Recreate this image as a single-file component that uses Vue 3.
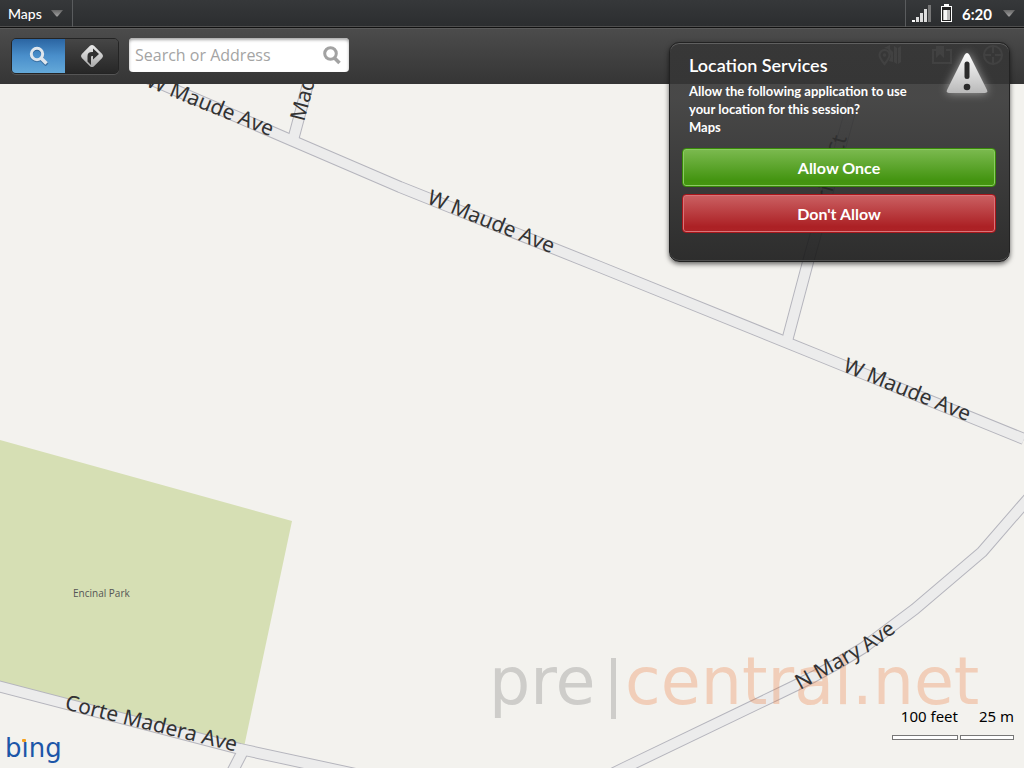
<script setup>
import { ref } from 'vue'

const query = ref('')
const mode = ref('search')
const dialogOpen = ref(true)

const roads = [
  'M100 57 L145 77 L293 141 L400 187 L600 267 L820 356 L1024 439',
  'M293 140 L308 84 L315 58',
  'M787 341 L808 262 L845 130 L856 90',
  'M-10 684 L240 749 L360 775',
  'M243 751 L228 780',
  'M604 778 L624 768 L780 693 L813 677 L840 662 L863 648 L915 609 L982 552 L1034 492'
]
</script>

<template>
  <div class="screen">
    <header class="status">
      <button class="app-menu" type="button">
        Maps
        <svg width="14" height="9" viewBox="0 0 14 9" aria-hidden="true">
          <path d="M1 1h12L8 7q-1 1-2 0z" fill="url(#arrow)" />
          <defs>
            <linearGradient id="arrow" x2="0" y2="1">
              <stop stop-color="#646464" />
              <stop offset="1" stop-color="#a4a4a4" />
            </linearGradient>
          </defs>
        </svg>
      </button>
      <button class="system" type="button" aria-label="System menu, 6:20">
        <svg width="19" height="19" viewBox="0 0 19 19" aria-hidden="true">
          <path d="M0 16h3v2H0z" fill="#fff" />
          <path d="M4 13h3v5H4z" fill="#ddd" />
          <path d="M8 9h3v9H8z" fill="#ddd" />
          <path d="M12 5h3v13h-3z" fill="#ddd" />
          <path d="M16 1h3v17h-3z" fill="#777" />
        </svg>
        <svg class="battery" width="11" height="19" viewBox="0 0 11 19" aria-hidden="true">
          <path d="M3 0h5v2H3z" fill="#fff" />
          <rect x=".5" y="2.500" width="10" height="15" fill="#222" stroke="#fff" />
          <path d="M2 6h7v10H2z" fill="#bbb" />
          <path d="M3 6h3v10H3z" fill="#f7f7f7" />
        </svg>
        <span class="clock">6:20</span>
        <svg width="14" height="9" viewBox="0 0 14 9" aria-hidden="true">
          <path d="M1 1h12L8 7q-1 1-2 0z" fill="url(#arrow)" />
        </svg>
      </button>
    </header>

    <nav class="toolbar">
      <div class="modes">
        <button type="button" aria-label="Search" :class="{ on: mode === 'search' }" @click="mode = 'search'">
          <svg width="20" height="20" viewBox="0 0 20 20" aria-hidden="true">
            <g fill="none" stroke="#193f68" opacity=".45" transform="translate(0 1)">
              <circle cx="8" cy="8" r="5.7" stroke-width="3" />
              <path d="M12 12l6 6" stroke-width="4" />
            </g>
            <g fill="none" stroke="#dfe6ed">
              <circle cx="8" cy="8" r="5.7" stroke-width="3" />
              <path d="M12 12l5.5 5.5" stroke-width="3.6" />
            </g>
          </svg>
        </button>
        <button type="button" aria-label="Directions" :class="{ on: mode === 'route' }" @click="mode = 'route'">
          <svg width="24" height="24" viewBox="0 0 24 24" aria-hidden="true">
            <defs>
              <linearGradient id="sign" x2="0" y2="1">
                <stop stop-color="#ececec" />
                <stop offset="1" stop-color="#a9a9a9" />
              </linearGradient>
            </defs>
            <path d="M10 1.8q2-1.8 4 0l8.200 8.200q1.800 2 0 4L14 22.200q-2 1.800-4 0L1.800 14q-1.800-2 0-4z" fill="url(#sign)" />
            <path d="M7.500 17.500V12q0-4 4.500-4h1V4.500L19 10l-6 5.500V12h-1q-1 0-1 1v8z" fill="#303030" />
          </svg>
        </button>
      </div>
      <label class="search">
        <input v-model="query" type="text" placeholder="Search or Address" aria-label="Search or Address" />
        <svg width="18" height="19" viewBox="0 0 18 19" fill="none" stroke="#a2a2a2" aria-hidden="true">
          <circle cx="7.500" cy="7.500" r="5.800" stroke-width="3" />
          <path d="M11.500 12l5 5" stroke-width="3.600" />
        </svg>
      </label>
      <div class="tools">
        <button type="button" aria-label="Map view">
          <svg width="24" height="22" viewBox="0 0 24 22" aria-hidden="true">
            <path d="M6 4l6-3v4l3 3v10l-4-1 2-5-3-7-4-1zM16 2l3 2v16l-3-2zM20 4l3-2v16l-3 2z" fill="#aaa" />
            <path d="M6.500 20q-5-6-5-9a5 5 0 0 1 10 0q0 3-5 9z" fill="none" stroke="#aaa" stroke-width="2" />
            <circle cx="6.500" cy="11" r="1.700" fill="#aaa" />
          </svg>
        </button>
        <button type="button" aria-label="Bookmarks">
          <svg width="20" height="20" viewBox="0 0 20 20" aria-hidden="true">
            <path d="M4 5H1v13h18V5h-5" fill="none" stroke="#aaa" stroke-width="2" />
            <path d="M4 1h8v12l-4-4-4 4z" fill="#aaa" />
          </svg>
        </button>
        <button type="button" aria-label="My location">
          <svg width="22" height="22" viewBox="0 0 22 22" fill="none" stroke="#aaa" stroke-width="2" aria-hidden="true">
            <circle cx="11" cy="11" r="9" />
            <path d="M11 2v7M11 13v7M2 11h7M13 11h7" />
          </svg>
        </button>
      </div>
    </nav>

    <main class="map">
      <svg class="tiles" viewBox="0 84 1024 684" preserveAspectRatio="xMidYMid slice" role="img" aria-label="Street map">
        <defs>
          <path id="mary" d="M800 690 L842 667 L870 651 L910 622" />
        </defs>
        <path d="M0 440L292 521L244 747L0 686z" fill="#d6dfb4" />
        <g fill="none" stroke-linejoin="round">
          <path v-for="d in roads" :key="'edge' + d" :d="d" stroke="#b5b5bd" stroke-width="12" />
          <path v-for="d in roads" :key="'fill' + d" :d="d" stroke="#ececec" stroke-width="10" />
        </g>
        <g class="watermark">
          <text x="489" y="704" fill="#666">pre</text>
          <path d="M611 658h5v61h-5z" fill="#666" />
          <text x="625" y="704" fill="#ed6c24">central.net</text>
        </g>
        <g class="street">
          <text transform="translate(145 86) rotate(22)">W Maude Ave</text>
          <text transform="translate(426 203) rotate(22)">W Maude Ave</text>
          <text transform="translate(842 371) rotate(22)">W Maude Ave</text>
          <text transform="translate(304 122) rotate(-75)">Madrone Ct</text>
          <text transform="translate(64 709) rotate(14)">Corte Madera Ave</text>
          <text transform="translate(822 231) rotate(-75)">Marion Ct</text>
          <text><textPath href="#mary">N Mary Ave</textPath></text>
        </g>
        <text class="park" x="73" y="597">Encinal Park</text>
      </svg>

      <div class="bing">
        <svg width="70" height="34" viewBox="0 0 70 34" role="img" aria-label="bing">
          <text x="0" y="23">bing</text>
          <path d="M17 2h5v6h-5z" fill="#f3f2ee" />
          <rect x="17" y="5" width="4" height="3" rx="1" fill="#f5a11c" />
        </svg>
      </div>
      <div class="scale">
        <div class="feet">100 feet<i></i></div>
        <div class="metres">25 m<i></i></div>
      </div>
    </main>

    <section v-if="dialogOpen" class="dialog" role="dialog" aria-labelledby="dialog-title">
      <div class="message">
        <div>
          <h1 id="dialog-title">Location Services</h1>
          <p>Allow the following application to use your location for this session?<br />Maps</p>
        </div>
        <svg class="warning" width="54" height="54" viewBox="0 0 54 54" aria-hidden="true">
          <defs>
            <linearGradient id="alert" x2="0" y2="1">
              <stop stop-color="#fff" />
              <stop offset="1" stop-color="#b9b9b9" />
            </linearGradient>
          </defs>
          <path d="M24.500 6q2.500-4 5 0L47 41q1 3-2 3H9q-3 0-2-3z" fill="url(#alert)" />
          <path d="M27 15v12.500" stroke="#2b2b2b" stroke-width="5" stroke-linecap="round" />
          <circle cx="27" cy="38" r="3.300" fill="#2b2b2b" />
        </svg>
      </div>
      <button class="choice allow" type="button" @click="dialogOpen = false">Allow Once</button>
      <button class="choice deny" type="button" @click="dialogOpen = false">Don't Allow</button>
    </section>
  </div>
</template>

<style>
body {
  margin: 0;
}
</style>

<style scoped>
.screen {
  position: relative;
  display: flex;
  flex-direction: column;
  min-height: 100vh;
  font-family: Lato, "Open Sans", sans-serif;
  color: #fff;
  overflow: hidden;
}
button {
  font: inherit;
  color: inherit;
  border: 0;
  padding: 0;
  background: none;
  cursor: pointer;
}
svg {
  display: block;
  flex: none;
}
.status {
  display: flex;
  justify-content: space-between;
  box-sizing: border-box;
  height: 28px;
  background: linear-gradient(#36383a, #2b2d2f);
  border-bottom: 1px solid #111;
  box-shadow: inset 0 -1px #4e4e4e;
}
.app-menu,
.system {
  display: flex;
  align-items: center;
}
.app-menu {
  gap: 8px;
  padding: 0 8px;
  font-size: 14px;
  font-weight: 500;
  border-right: 1px solid #5a5c5e;
}
.system {
  gap: 10px;
  padding: 0 8px 0 6px;
  border-left: 1px solid #5a5c5e;
}
.clock {
  font-size: 15px;
  font-weight: 700;
}
.toolbar {
  display: flex;
  align-items: flex-start;
  gap: 10px;
  box-sizing: border-box;
  height: 56px;
  padding: 10px 20px 0 11px;
  background: linear-gradient(#4c4c4c, #353535);
  box-shadow: inset 0 1px #5a5a5a;
}
.modes {
  display: flex;
  box-sizing: border-box;
  height: 36px;
  border: 1px solid #242424;
  border-radius: 5px;
  overflow: hidden;
  box-shadow: 0 1px #555;
}
.modes button {
  display: grid;
  place-items: center;
  width: 53px;
  background: linear-gradient(#464646, #272727);
}
.modes .on {
  background: linear-gradient(#2b65a2, #4a8fcb 50%, #64a9d9);
}
.search {
  display: flex;
  align-items: center;
  box-sizing: border-box;
  width: 220px;
  height: 34px;
  padding: 0 8px 0 6px;
  border-radius: 4px;
  background: #fff;
  box-shadow: inset 0 2px 3px #aaa;
}
.search input {
  flex: 1;
  min-width: 0;
  padding: 0;
  border: 0;
  outline: 0;
  background: none;
  font: 16px "Open Sans", sans-serif;
  color: #333;
}
.search input::placeholder {
  color: #a4a4a4;
  opacity: 1;
}
.tools {
  display: flex;
  align-items: center;
  gap: 30px;
  height: 34px;
  margin-left: auto;
}
.map {
  position: relative;
  flex: 1;
  background: #f3f2ee;
  color: #000;
}
.tiles {
  position: absolute;
  inset: 0;
  width: 100%;
  height: 100%;
}
.street {
  font-family: "Noto Sans", sans-serif;
  font-size: 21px;
  fill: #333;
}
.park {
  font-family: "Open Sans", sans-serif;
  font-size: 10px;
  fill: #555;
}
.watermark {
  font-family: "DejaVu Sans", sans-serif;
  font-size: 65px;
  opacity: 0.26;
}
.bing {
  position: absolute;
  left: 5px;
  bottom: 0;
}
.bing text {
  font-family: "DejaVu Sans", sans-serif;
  font-size: 26px;
  fill: #1c56a8;
}
.scale {
  position: absolute;
  right: 10px;
  bottom: 28px;
  display: flex;
  gap: 2px;
  font: 15px/22px "Noto Sans", sans-serif;
  text-align: right;
}
.feet {
  width: 66px;
}
.metres {
  width: 54px;
}
.scale i {
  display: block;
  box-sizing: border-box;
  height: 5px;
  margin-top: 8px;
  border: 1px solid #777;
  background: #fff;
}
.dialog {
  position: absolute;
  top: 42px;
  right: 14px;
  box-sizing: border-box;
  width: 341px;
  padding: 10px 13px 28px 12px;
  border: 1px solid #222;
  border-radius: 10px;
  background: linear-gradient(rgba(54, 54, 54, 0.9), rgba(54, 54, 54, 0.9) 25%, rgba(24, 24, 24, 0.9));
  box-shadow: 0 2px 5px rgba(0, 0, 0, 0.6), inset 0 1px #606060, inset 0 -1px #505050;
}
.message {
  display: flex;
  justify-content: space-between;
  height: 95px;
  padding: 0 2px 0 7px;
}
.message h1 {
  margin: 0;
  font-size: 18px;
  line-height: 24px;
  font-weight: 600;
}
.message p {
  margin: 5px 0 0;
  width: 236px;
  font-size: 13px;
  line-height: 18px;
  font-weight: 700;
}
.warning {
  margin-top: -4px;
  filter: drop-shadow(0 0 5px rgba(255, 255, 255, 0.5));
}
.choice {
  display: block;
  box-sizing: border-box;
  width: 100%;
  height: 39px;
  border-radius: 4px;
  font-size: 16px;
  font-weight: 700;
}
.choice + .choice {
  margin-top: 7px;
}
.allow {
  border: 1px solid #388909;
  background: linear-gradient(#7cba50, #439410 85%, #45950f);
  box-shadow: inset 0 0 0 1px #8acc60;
}
.deny {
  border: 1px solid #a9161b;
  background: linear-gradient(#cb6163, #ac2125 85%, #ad2226);
  box-shadow: inset 0 0 0 1px #d87478;
}
</style>
